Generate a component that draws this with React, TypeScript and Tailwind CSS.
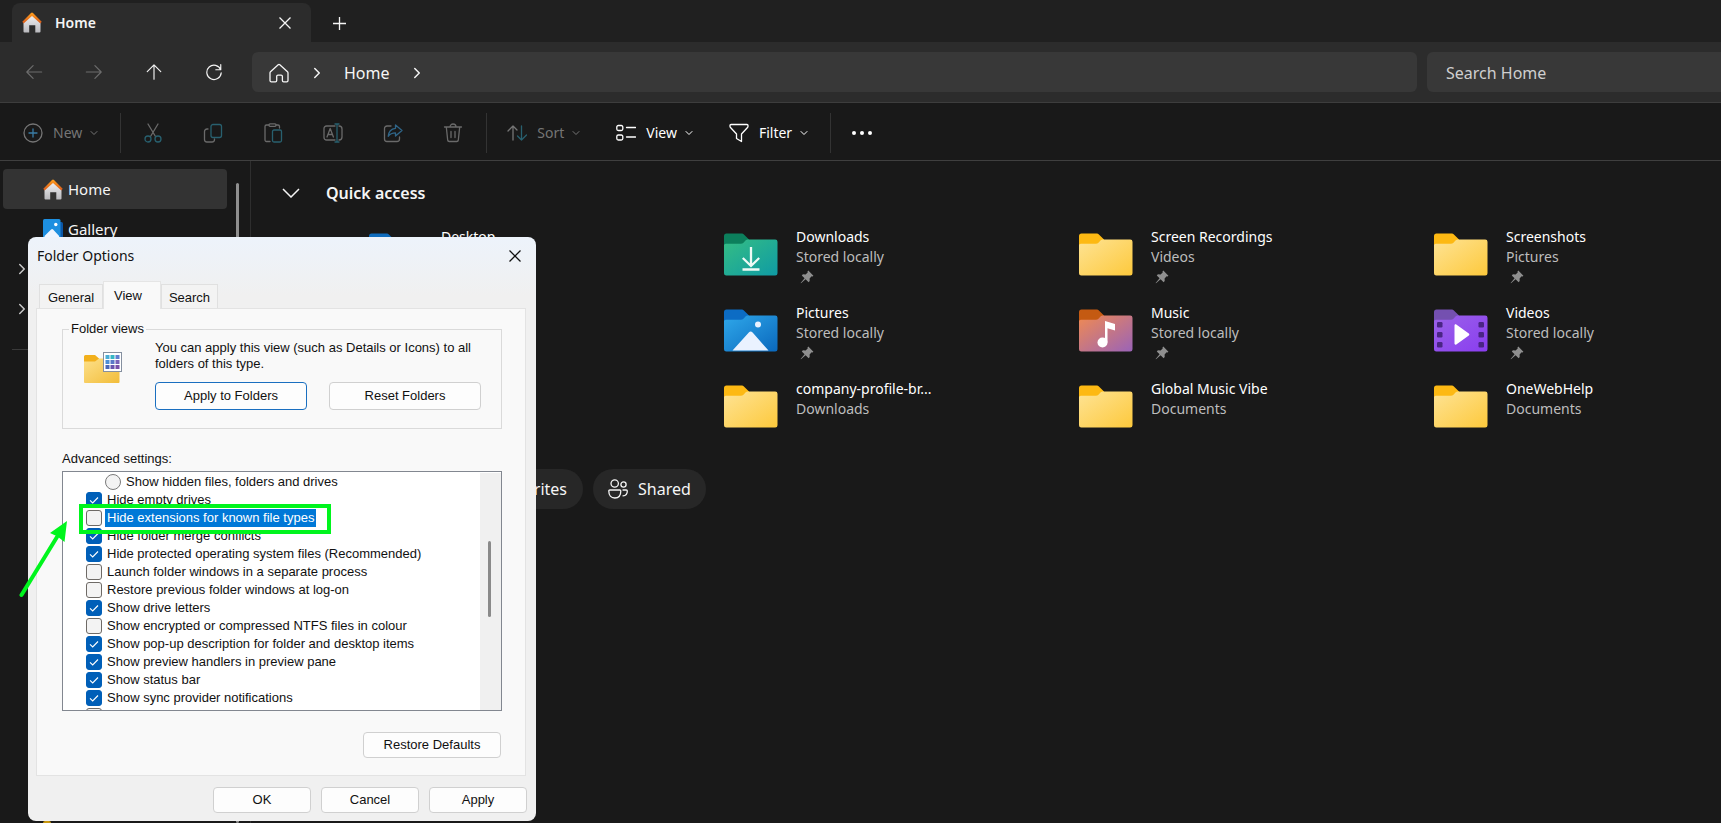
import type { ReactNode } from "react";
import { ChevronDown, ChevronRight } from "lucide-react";

type FolderKind = "plain" | "downloads" | "desktop" | "pictures" | "music" | "videos";

type QuickItem = {
  name: string;
  location: string;
  kind: FolderKind;
  pinned?: boolean;
};

const quickAccess: (QuickItem | null)[] = [
  { name: "Desktop", location: "Stored locally", kind: "desktop", pinned: true },
  { name: "Downloads", location: "Stored locally", kind: "downloads", pinned: true },
  { name: "Screen Recordings", location: "Videos", kind: "plain", pinned: true },
  { name: "Screenshots", location: "Pictures", kind: "plain", pinned: true },
  null,
  { name: "Pictures", location: "Stored locally", kind: "pictures", pinned: true },
  { name: "Music", location: "Stored locally", kind: "music", pinned: true },
  { name: "Videos", location: "Stored locally", kind: "videos", pinned: true },
  null,
  { name: "company-profile-br...", location: "Downloads", kind: "plain" },
  { name: "Global Music Vibe", location: "Documents", kind: "plain" },
  { name: "OneWebHelp", location: "Documents", kind: "plain" },
];

const settings = [
  { label: "Hide empty drives", checked: true },
  { label: "Hide extensions for known file types", checked: false, selected: true },
  { label: "Hide folder merge conflicts", checked: true },
  { label: "Hide protected operating system files (Recommended)", checked: true },
  { label: "Launch folder windows in a separate process", checked: false },
  { label: "Restore previous folder windows at log-on", checked: false },
  { label: "Show drive letters", checked: true },
  { label: "Show encrypted or compressed NTFS files in colour", checked: false },
  { label: "Show pop-up description for folder and desktop items", checked: true },
  { label: "Show preview handlers in preview pane", checked: true },
  { label: "Show status bar", checked: true },
  { label: "Show sync provider notifications", checked: true },
];

const folderColors: Record<FolderKind, { tab: string; from: string; to: string }> = {
  plain: { tab: "#fdb913", from: "#fee394", to: "#fdc93c" },
  desktop: { tab: "#0f6cbd", from: "#35b5f0", to: "#0f7fd4" },
  downloads: { tab: "#0c7f5c", from: "#35bd84", to: "#0f9ba4" },
  pictures: { tab: "#0c6cc4", from: "#2fa8ea", to: "#0a68bd" },
  music: { tab: "#c45a12", from: "#f08a52", to: "#9a63b8" },
  videos: { tab: "#7450b0", from: "#9a62e8", to: "#8a3df0" },
};

/* ---------- icons ---------- */

function HouseIcon() {
  return (
    <svg width="20" height="21" viewBox="0 0 20 21" aria-hidden="true">
      <defs>
        <linearGradient id="house-body" x1="0" y1="0" x2="0" y2="1">
          <stop offset="0" stopColor="#f3f3f5" />
          <stop offset="1" stopColor="#b9b9bd" />
        </linearGradient>
        <linearGradient id="house-roof" x1="0" y1="0" x2="0" y2="1">
          <stop offset="0" stopColor="#ffa01e" />
          <stop offset="1" stopColor="#d8591c" />
        </linearGradient>
      </defs>
      <path d="M1.5 10 10 2.5 18.5 10v9.5a1 1 0 0 1-1 1h-4.2v-7.3H7.2v7.3H2.5a1 1 0 0 1-1-1Z" fill="url(#house-body)" />
      <path d="M.3 9.8 9 .9a1.4 1.4 0 0 1 2 0l8.7 8.9-1.3 1.7L10 3.9 1.6 11.5Z" fill="url(#house-roof)" />
    </svg>
  );
}

function GalleryIcon() {
  return (
    <svg width="20" height="20" viewBox="0 0 20 20" aria-hidden="true">
      <rect x="5" y="3" width="15" height="17" rx="1.5" fill="#0b57a8" />
      <rect width="17.5" height="20" rx="1.5" fill="#1d8fe0" />
      <circle cx="12.8" cy="5.5" r="1.7" fill="#fff" />
      <path d="m1.5 17 6.6-6.500a1.400 1.400 0 0 1 2 0l6 6.500v3H1.500Z" fill="#eef5ff" />
    </svg>
  );
}

function StrokeIcon({ size = 20, children }: { size?: number; children: ReactNode }) {
  return (
    <svg
      width={size}
      height={size}
      viewBox="0 0 20 20"
      fill="none"
      stroke="currentColor"
      strokeWidth="1.3"
      strokeLinecap="round"
      strokeLinejoin="round"
      aria-hidden="true"
      className="shrink-0"
    >
      {children}
    </svg>
  );
}

function CloseIcon() {
  return (
    <svg width="12" height="12" viewBox="0 0 12 12" fill="none" stroke="currentColor" strokeWidth="1.3" aria-hidden="true">
      <path d="m.5.5 11 11M11.5.5l-11 11" />
    </svg>
  );
}

function PinIcon() {
  return (
    <svg width="14" height="14" viewBox="0 0 14 14" aria-hidden="true">
      <path
        d="M8.300.6 13.400 5.700l-.8.8-1-.2-2 2.200.1 2.600-1.100 1.100-3-3L1 13.300.6 12.900l4-4.700-2.800-2.800L2.900 4.300l2.700.1 2.100-2-.2-1Z"
        fill="#8f8f8f"
      />
    </svg>
  );
}

function FolderIcon({ kind }: { kind: FolderKind }) {
  const c = folderColors[kind];
  const id = `folder-${kind}`;
  return (
    <svg width="54" height="43" viewBox="0 0 54 43" className="shrink-0" aria-hidden="true">
      <defs>
        <linearGradient id={id} x1="0" y1="0" x2="1" y2="1">
          <stop offset="0" stopColor={c.from} />
          <stop offset="1" stopColor={c.to} />
        </linearGradient>
      </defs>
      <path d="M0 3a2.500 2.500 0 0 1 2.500-2.500H17c1.500 0 2.400.4 3.400 1.400L25 6.500V20H0Z" fill={c.tab} />
      <path
        d="M0 12.500c0-1 .8-1.700 1.800-1.700H16c1.600 0 2.600-.4 3.700-1.400l1.800-1.800c.8-.8 1.700-1.100 2.900-1.100h26.800A2.300 2.300 0 0 1 53.500 8.800v31.400a2.300 2.300 0 0 1-2.300 2.300H2.300A2.300 2.300 0 0 1 0 40.200Z"
        fill={`url(#${id})`}
      />
      {kind === "downloads" && (
        <g fill="none" stroke="#effaf5" strokeWidth="2.3">
          <path d="M27 14v18.500M18.800 25l8.200 8 8.200-8M18.500 36.500h17" />
        </g>
      )}
      {kind === "pictures" && (
        <g fill="#eaf2ff">
          <circle cx="34" cy="15.5" r="3" />
          <path d="m8.500 41.500 16.300-18a2.500 2.500 0 0 1 3.800 0L44.500 41.500Z" />
        </g>
      )}
      {kind === "music" && (
        <g fill="#fff">
          <circle cx="23.500" cy="33.500" r="5" />
          <path d="M26 33.500V12l10 3v6.500l-7.500-2.300v14.300Z" />
        </g>
      )}
      {kind === "videos" && (
        <>
          <g fill="#4a2585">
            {[13, 23, 33].map((y) => (
              <g key={y}>
                <rect x="3" y={y} width="5.5" height="5.5" rx="1.2" />
                <rect x="44.5" y={y} width="5.5" height="5.5" rx="1.2" />
              </g>
            ))}
          </g>
          <path d="M20.500 16.500c0-1 1-1.500 1.800-1l12.500 9c.7.5.7 1.500 0 2l-12.500 9c-.8.5-1.800 0-1.800-1Z" fill="#fff" />
        </>
      )}
    </svg>
  );
}

function FolderViewsIcon() {
  const tiles = ["#4aaed6", "#35b6c4", "#5e7fd0", "#4d8fd6", "#5b78c8", "#7a62b8", "#4a68b8", "#6a55ae", "#7a4fa8"];
  return (
    <svg width="38" height="32" viewBox="0 0 38 32" className="shrink-0" aria-hidden="true">
      <defs>
        <linearGradient id="views-folder" x1="0" y1="0" x2="1" y2="1">
          <stop offset="0" stopColor="#fde08a" />
          <stop offset="1" stopColor="#f2bd3a" />
        </linearGradient>
      </defs>
      <path d="M0 4.500A1.500 1.500 0 0 1 1.500 3H11l4 3.500V12H0Z" fill="#f2b01c" />
      <path d="M0 9.500h11l4-3h19.500a1 1 0 0 1 1 1V30a1 1 0 0 1-1 1H1a1 1 0 0 1-1-1Z" fill="url(#views-folder)" />
      <rect x="19.5" y=".5" width="18" height="19" fill="#fff" stroke="#8590a0" />
      {tiles.map((color, i) => (
        <rect key={i} x={21.5 + (i % 3) * 5} y={3 + Math.floor(i / 3) * 5} width="4" height="4" fill={color} />
      ))}
    </svg>
  );
}

/* ---------- explorer window ---------- */

function NavButton({ label, muted, children }: { label: string; muted?: boolean; children: ReactNode }) {
  return (
    <button
      aria-label={label}
      className={`flex h-10 w-[60px] items-center justify-center ${muted ? "text-[#6c6c6c]" : "text-[#f2f2f2]"}`}
    >
      {children}
    </button>
  );
}

function TitleBar() {
  return (
    <header className="flex h-[42px] items-end bg-[#202020] pl-3">
      <div className="flex h-[39px] w-[299px] items-center rounded-t-lg bg-[#2c2c2c] pl-[10px] pr-5">
        <HouseIcon />
        <span className="ml-[13px] flex-1 text-sm font-semibold">Home</span>
        <button aria-label="Close tab">
          <CloseIcon />
        </button>
      </div>
      <button aria-label="New tab" className="ml-[22px] flex h-[38px] items-center">
        <svg width="13" height="13" viewBox="0 0 13 13" stroke="currentColor" strokeWidth="1.3" aria-hidden="true">
          <path d="M6.5 0v13M0 6.5h13" />
        </svg>
      </button>
    </header>
  );
}

function AddressRow() {
  return (
    <nav className="flex h-[61px] items-center border-b border-[#3d3d3d] bg-[#2c2c2c] pl-1">
      <NavButton label="Back" muted>
        <StrokeIcon size={18}>
          <path d="M18.500 10H2M9 3l-7 7 7 7" />
        </StrokeIcon>
      </NavButton>
      <NavButton label="Forward" muted>
        <StrokeIcon size={18}>
          <path d="M1.500 10H18M11 3l7 7-7 7" />
        </StrokeIcon>
      </NavButton>
      <NavButton label="Up">
        <StrokeIcon size={18}>
          <path d="M10 18V2M2.500 9.500 10 2l7.500 7.500" />
        </StrokeIcon>
      </NavButton>
      <NavButton label="Refresh">
        <StrokeIcon size={18}>
          <path d="M17.500 7.500A8 8 0 1 0 18 11M17.500 1.800v5.700h-5.500" />
        </StrokeIcon>
      </NavButton>

      <div className="ml-2 flex h-10 flex-1 items-center rounded-md bg-[#383838] pl-[17px] pt-px">
        <StrokeIcon>
          <path d="M1.500 8.800 9.200 1.800a1.200 1.200 0 0 1 1.600 0l7.700 7c.3.300.5.700.5 1.200V17.500a1.300 1.300 0 0 1-1.300 1.300h-3a1.300 1.300 0 0 1-1.300-1.300v-4a1.300 1.300 0 0 0-1.300-1.300H9a1.300 1.300 0 0 0-1.300 1.300v4a1.300 1.300 0 0 1-1.300 1.300h-3.900A1.300 1.300 0 0 1 1 17.500V10c0-.5.200-.9.500-1.200Z" />
        </StrokeIcon>
        <ChevronRight size={18} className="ml-[19px]" />
        <a href="#home" className="ml-[18px] text-base">
          Home
        </a>
        <ChevronRight size={18} className="ml-[18px]" />
      </div>

      <input
        type="search"
        aria-label="Search Home"
        placeholder="Search Home"
        className="ml-[10px] h-10 w-[294px] rounded-l-md bg-[#383838] pl-[19px] pt-px text-base outline-none placeholder:text-[#cfcfcf]"
      />
    </nav>
  );
}

function MenuButton({ label, muted, icon }: { label: string; muted?: boolean; icon: ReactNode }) {
  return (
    <button className={`flex items-center text-sm ${muted ? "text-[#757575]" : "text-white"}`}>
      {icon}
      <span className="ml-[10px]">{label}</span>
      <ChevronDown size={12} className="ml-1.5" />
    </button>
  );
}

function ToolButton({ label, children }: { label: string; children: ReactNode }) {
  return (
    <button aria-label={label} className="flex w-[60px] justify-center text-[#6a6a6a]">
      <StrokeIcon>{children}</StrokeIcon>
    </button>
  );
}

function Toolbar() {
  const teal = "#28606f";
  return (
    <div className="flex h-[58px] items-center border-b border-[#3f3f3f] bg-[#191919] pl-[23px] pt-[3px]">
      <MenuButton
        label="New"
        muted
        icon={
          <StrokeIcon>
            <circle cx="10" cy="10" r="9" />
            <path d="M10 6v8M6 10h8" stroke="#3a7ca5" />
          </StrokeIcon>
        }
      />
      <span className="ml-5 h-10 w-px bg-[#333]" />
      <div className="ml-0.5 flex">
        <ToolButton label="Cut">
          <path d="m5 1 7.500 12.500M15 1 7.500 13.500" />
          <g stroke={teal}>
            <circle cx="5" cy="16" r="3" />
            <circle cx="15" cy="16" r="3" />
          </g>
        </ToolButton>
        <ToolButton label="Copy">
          <path d="M5 6H4a2.500 2.500 0 0 0-2.500 2.500v8A2.500 2.500 0 0 0 4 19h5a2.500 2.500 0 0 0 2.500-2.500V16" />
          <rect x="8" y="1.500" width="10.500" height="13" rx="2" stroke={teal} />
        </ToolButton>
        <ToolButton label="Paste">
          <path d="M7 18.500H3.500A1.500 1.500 0 0 1 2 17V3.500A1.500 1.500 0 0 1 3.500 2H6M13 2h2a1.500 1.500 0 0 1 1.500 1.500V5" />
          <rect x="6" y=".8" width="7" height="2.500" rx="1" />
          <rect x="9.500" y="7" width="9" height="12" rx="1.500" stroke={teal} />
        </ToolButton>
        <ToolButton label="Rename">
          <path d="M12 3H3.500A2.500 2.500 0 0 0 1 5.500v9A2.500 2.500 0 0 0 3.500 17H12M16 3a3 3 0 0 1 3 3v8a3 3 0 0 1-3 3M4 14l3.200-8.500L10.400 14M5 11.500h4.400" />
          <path d="M14 1v18M12 1h4M12 19h4" stroke={teal} />
        </ToolButton>
        <ToolButton label="Share">
          <path d="M8 3H4a2.500 2.500 0 0 0-2.500 2.500v10.500A2.500 2.500 0 0 0 4 18.500h10a2.500 2.500 0 0 0 2.500-2.500v-2" />
          <path d="m12.500 2 6.500 5.500-6.500 5.500V9.800c-3.500 0-5.500 1-7.300 3.500.4-4.500 3-7.500 7.300-8Z" stroke="#2f6588" />
        </ToolButton>
        <ToolButton label="Delete">
          <path d="M1.500 4h17M7 4a3 3 0 0 1 6 0M3.300 4l1.400 13.200A1.500 1.500 0 0 0 6.200 18.500h7.600a1.500 1.500 0 0 0 1.500-1.300L16.700 4M8 8.500v6M12 8.500v6" />
        </ToolButton>
      </div>
      <span className="ml-[3px] h-10 w-px bg-[#333]" />
      <div className="ml-5 flex gap-[34px]">
        <MenuButton
          label="Sort"
          muted
          icon={
            <StrokeIcon>
              <path d="M6 17V3M1 8l5-5 4 4" />
              <path d="M14.500 3v14M10.500 13l4 4 5-5" stroke={teal} />
            </StrokeIcon>
          }
        />
        <MenuButton
          label="View"
          icon={
            <StrokeIcon>
              <rect x=".8" y="2.500" width="6" height="5" rx="1.500" />
              <rect x=".8" y="12" width="6" height="5" rx="1.500" />
              <path d="M10.500 4.500h9M10.500 14h9" />
            </StrokeIcon>
          }
        />
        <MenuButton
          label="Filter"
          icon={
            <StrokeIcon>
              <path d="M2 1.500h16a1 1 0 0 1 1 1v.8c0 .4-.2.900-.5 1.200L12.500 11v7.500L7.500 15.500V11l-6-6.500A1.700 1.700 0 0 1 1 3.300v-.8a1 1 0 0 1 1-1Z" />
            </StrokeIcon>
          }
        />
      </div>
      <span className="ml-5 h-10 w-px bg-[#333]" />
      <button aria-label="See more" className="ml-[21px] flex gap-1">
        <span className="h-1 w-1 rounded-full bg-white" />
        <span className="h-1 w-1 rounded-full bg-white" />
        <span className="h-1 w-1 rounded-full bg-white" />
      </button>
    </div>
  );
}

function Sidebar() {
  return (
    <aside className="flex w-[251px] shrink-0 overflow-hidden border-r border-[#2e2e2e] pt-2">
      <div className="flex w-[227px] flex-col pl-[3px]">
        <a href="#home" className="flex h-10 shrink-0 items-center gap-[5px] rounded bg-[#333] pl-[40px] text-[15px]">
          <HouseIcon />
          Home
        </a>
        <a href="#gallery" className="flex h-10 shrink-0 items-center gap-[5px] pl-[40px] text-[15px]">
          <GalleryIcon />
          Gallery
        </a>
        <button aria-label="Expand" className="flex h-10 shrink-0 items-center pl-[10px] text-[#c8c8c8]">
          <ChevronRight size={18} />
        </button>
        <button aria-label="Expand" className="flex h-10 shrink-0 items-center pl-[10px] text-[#c8c8c8]">
          <ChevronRight size={18} />
        </button>
        <hr className="ml-[9px] mt-5 border-[#3a3a3a]" />
        {/* top of the next folder in the list */}
        <span className="ml-10 mt-auto h-0.5 w-2 rounded-t bg-[#c9980f]" />
      </div>
      <div className="ml-[9px] mt-[14px] w-[3px] rounded-full bg-[#8f8f8f]" />
    </aside>
  );
}

function QuickAccessItem({ item }: { item: QuickItem }) {
  return (
    <a href={`#${item.kind}`} className="flex h-[76px] gap-[18px]">
      <span className="pt-1.5">
        <FolderIcon kind={item.kind} />
      </span>
      <span className="flex flex-col text-sm leading-5">
        <span className="text-white">{item.name}</span>
        <span className="text-[#bdbdbd]">{item.location}</span>
        {item.pinned && (
          <span className="pl-1 pt-[3px]">
            <PinIcon />
          </span>
        )}
      </span>
    </a>
  );
}

function MainPane() {
  return (
    <main className="min-w-0 flex-1 overflow-hidden">
      <h2 className="flex h-16 items-center pl-[31px] text-base font-semibold">
        <button aria-label="Collapse" className="mr-[26px]">
          <svg width="18" height="10" viewBox="0 0 18 10" fill="none" stroke="currentColor" strokeWidth="1.5" aria-hidden="true">
            <path d="m1 1 8 8 8-8" />
          </svg>
        </button>
        Quick access
      </h2>

      <ul className="mt-0.5 grid grid-cols-[repeat(4,355px)] pl-[118px]">
        {quickAccess.map((item, i) => (
          <li key={i}>{item && <QuickAccessItem item={item} />}</li>
        ))}
      </ul>

      <div className="mt-[14px] flex gap-[10px] pl-[184px]">
        <button className="flex h-10 w-[148px] items-center justify-end rounded-full bg-[#272727] pr-4 text-base">
          Favourites
        </button>
        <button className="flex h-10 items-center gap-[10px] rounded-full bg-[#272727] px-[15px] text-base">
          <StrokeIcon>
            <circle cx="6.700" cy="4.500" r="3.700" />
            <circle cx="15.500" cy="5.500" r="2.600" />
            <path d="M1.800 11h10a1 1 0 0 1 1 1c0 4.200-2.200 7-6 7s-6-2.800-6-7a1 1 0 0 1 1-1ZM15 11h3.300a1 1 0 0 1 1 1c0 3-1.300 4.800-4.300 4.800" />
          </StrokeIcon>
          Shared
        </button>
      </div>
    </main>
  );
}

/* ---------- folder options dialog ---------- */

function DialogButton({ children, className }: { children: ReactNode; className: string }) {
  return <button className={`rounded border bg-[#fdfdfd] ${className}`}>{children}</button>;
}

function SettingRow({ label, checked, selected }: { label: string; checked: boolean; selected?: boolean }) {
  return (
    <label className="relative flex h-[18px] items-center pl-[23px]">
      <span className="relative mr-[3px] flex">
        <input
          type="checkbox"
          defaultChecked={checked}
          className="peer h-4 w-4 appearance-none rounded-[3px] border border-[#6e6a66] bg-[#f3f3f3] checked:border-[#005fb8] checked:bg-[#005fb8]"
        />
        <svg
          viewBox="0 0 16 16"
          fill="none"
          stroke="#fff"
          strokeWidth="1.1"
          aria-hidden="true"
          className="pointer-events-none absolute inset-0 hidden peer-checked:block"
        >
          <path d="m4 8.300 2.700 2.700L12 5.500" />
        </svg>
      </span>
      <span className={`px-0.5 leading-[18px] ${selected ? "bg-[#0078d7] text-white" : ""}`}>{label}</span>
      {selected && (
        <span className="pointer-events-none absolute -top-[5px] left-4 z-10 h-[30px] w-[252px] border-4 border-[#00f51d]" />
      )}
    </label>
  );
}

function FolderOptions() {
  return (
    <section
      role="dialog"
      aria-label="Folder Options"
      className="absolute left-7 top-[237px] w-[508px] rounded-lg bg-gradient-to-b from-[#edf3fb] via-[#f0f0f0] via-10% to-[#f0f0f0] pb-2 pl-2 pr-[9px] font-['Liberation_Sans',Arial,sans-serif] text-[13px] leading-4 text-[#111]"
    >
      <div className="flex h-[37px] items-center justify-between pl-px pr-[6px]">
        <h1 className="font-['Noto_Sans',sans-serif] text-sm">Folder Options</h1>
        <button aria-label="Close">
          <CloseIcon />
        </button>
      </div>

      <div role="tablist" className="flex items-end pl-[3px] pt-[7px]">
        <button role="tab" className="h-6 w-16 border border-b-0 border-[#e0e0e0] bg-[#f3f3f3] pt-0.5">
          General
        </button>
        <button role="tab" aria-selected="true" className="z-10 -mb-px h-7 w-[58px] border border-b-0 border-[#e5e5e5] bg-[#f9f9f9] pr-2">
          View
        </button>
        <button role="tab" className="h-6 w-[57px] border border-b-0 border-[#e0e0e0] bg-[#f3f3f3] pt-0.5">
          Search
        </button>
      </div>

      <div className="mr-px border border-[#e3e3e3] bg-[#f9f9f9] pb-[17px] pl-[25px] pr-[23px] pt-3">
        <fieldset className="h-[108px] border border-[#dadada] pl-[21px]">
          <legend className="-ml-[15px] px-0.5">Folder views</legend>
          <div className="flex gap-[33px] pt-[3px]">
            <div className="pt-3">
              <FolderViewsIcon />
            </div>
            <div>
              <p className="w-[330px]">You can apply this view (such as Details or Icons) to all folders of this type.</p>
              <div className="mt-[10px] flex gap-[22px]">
                <DialogButton className="h-7 w-[152px] border-[#1a6fc0]">Apply to Folders</DialogButton>
                <DialogButton className="h-7 w-[152px] border-[#d0d0d0]">Reset Folders</DialogButton>
              </div>
            </div>
          </div>
        </fieldset>

        <p id="advanced" className="mt-[22px]">
          Advanced settings:
        </p>
        <div
          role="group"
          aria-labelledby="advanced"
          className="mt-1 flex h-60 overflow-hidden border border-[#828790] bg-white pt-px"
        >
          <div className="flex-1">
            <label className="flex h-[18px] items-center pl-[42px]">
              <input
                type="radio"
                name="hidden-files"
                className="mr-[5px] h-4 w-4 appearance-none rounded-full border border-[#7a7a7a] bg-[#f3f3f3]"
              />
              Show hidden files, folders and drives
            </label>
            {settings.map((s) => (
              <SettingRow key={s.label} label={s.label} checked={s.checked} selected={s.selected} />
            ))}
            <SettingRow label="" checked={false} />
          </div>
          <div className="w-[21px] bg-[#f0f0f0] pl-2 pt-[68px]">
            <div className="h-[76px] w-[3px] rounded-full bg-[#8a8a8a]" />
          </div>
        </div>

        <div className="mt-[21px] flex justify-end pr-px">
          <DialogButton className="h-[26px] w-[138px] border-[#d0d0d0]">Restore Defaults</DialogButton>
        </div>
      </div>

      <div className="mt-[11px] flex justify-end gap-[10px]">
        <DialogButton className="h-[26px] w-[98px] border-[#d0d0d0]">OK</DialogButton>
        <DialogButton className="h-[26px] w-[98px] border-[#d0d0d0]">Cancel</DialogButton>
        <DialogButton className="h-[26px] w-[98px] border-[#d0d0d0]">Apply</DialogButton>
      </div>

      {/* arrow pointing at the highlighted setting */}
      <svg width="50" height="80" viewBox="0 0 50 80" className="pointer-events-none absolute -left-[9px] top-[282px]" aria-hidden="true">
        <path d="M2.500 76 38 18" stroke="#00f51d" strokeWidth="4" strokeLinecap="round" />
        <path d="M48 2 45.500 23 38.500 17.500 31 14Z" fill="#00f51d" />
      </svg>
    </section>
  );
}

export default function App() {
  return (
    <div className="relative flex h-screen flex-col overflow-hidden bg-[#191919] font-['Noto_Sans',sans-serif] text-[#f5f5f5]">
      <TitleBar />
      <AddressRow />
      <Toolbar />
      <div className="flex min-h-0 flex-1">
        <Sidebar />
        <MainPane />
      </div>
      <FolderOptions />
    </div>
  );
}
